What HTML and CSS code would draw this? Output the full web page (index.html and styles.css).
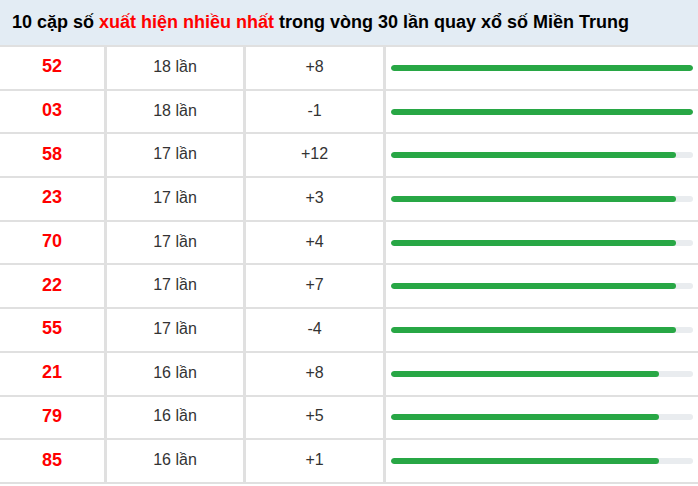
FILE: index.html
```html
<!DOCTYPE html>
<html lang="vi">
<head>
<meta charset="utf-8">
<link rel="stylesheet" href="styles.css">
</head>
<body>
<div class="box">
  <div class="title">10 cặp số <span class="hl">xuất hiện nhiều nhất</span> trong vòng 30 lần quay xổ số Miền Trung</div>
  <div class="grid">
    <div class="c num">52</div><div class="c">18 lần</div><div class="c">+8</div><div class="c bar"><div class="track"><div class="fill" style="width:100%"></div></div></div>
    <div class="c num">03</div><div class="c">18 lần</div><div class="c">-1</div><div class="c bar"><div class="track"><div class="fill" style="width:100%"></div></div></div>
    <div class="c num">58</div><div class="c">17 lần</div><div class="c">+12</div><div class="c bar"><div class="track"><div class="fill" style="width:94.4%"></div></div></div>
    <div class="c num">23</div><div class="c">17 lần</div><div class="c">+3</div><div class="c bar"><div class="track"><div class="fill" style="width:94.4%"></div></div></div>
    <div class="c num">70</div><div class="c">17 lần</div><div class="c">+4</div><div class="c bar"><div class="track"><div class="fill" style="width:94.4%"></div></div></div>
    <div class="c num">22</div><div class="c">17 lần</div><div class="c">+7</div><div class="c bar"><div class="track"><div class="fill" style="width:94.4%"></div></div></div>
    <div class="c num">55</div><div class="c">17 lần</div><div class="c">-4</div><div class="c bar"><div class="track"><div class="fill" style="width:94.4%"></div></div></div>
    <div class="c num">21</div><div class="c">16 lần</div><div class="c">+8</div><div class="c bar"><div class="track"><div class="fill" style="width:88.9%"></div></div></div>
    <div class="c num">79</div><div class="c">16 lần</div><div class="c">+5</div><div class="c bar"><div class="track"><div class="fill" style="width:88.9%"></div></div></div>
    <div class="c num">85</div><div class="c">16 lần</div><div class="c">+1</div><div class="c bar"><div class="track"><div class="fill" style="width:88.9%"></div></div></div>
  </div>
</div>
</body>
</html>
```
FILE: styles.css
```css
html, body {
  margin: 0;
  padding: 0;
  background: #fff;
}
body {
  font-family: "Liberation Sans", Arial, sans-serif;
}
.box {
  width: 698px;
}
.title {
  height: 45px;
  line-height: 45px;
  background: #e3ecf4;
  padding-left: 12px;
  font-size: 18px;
  font-weight: bold;
  color: #000;
  white-space: nowrap;
}
.hl {
  color: #ff0000;
}
.grid {
  display: grid;
  grid-template-columns: 104px 136px 137px 1fr;
  grid-auto-rows: 41.7px;
  column-gap: 3px;
  row-gap: 2px;
  background: #e0e0e0;
  padding: 2px 0;
}
.c {
  background: #fff;
  display: flex;
  align-items: center;
  justify-content: center;
  font-size: 16px;
  color: #333;
  padding-bottom: 2px;
}
.num {
  color: #ff0000;
  font-weight: bold;
  font-size: 18px;
}
.bar {
  justify-content: stretch;
  padding: 0 5px 0 5px;
}
.track {
  width: 100%;
  height: 6px;
  border-radius: 3px;
  background: #e9ecef;
  overflow: hidden;
}
.fill {
  height: 100%;
  background: #28a745;
  border-radius: 3px;
}
```
